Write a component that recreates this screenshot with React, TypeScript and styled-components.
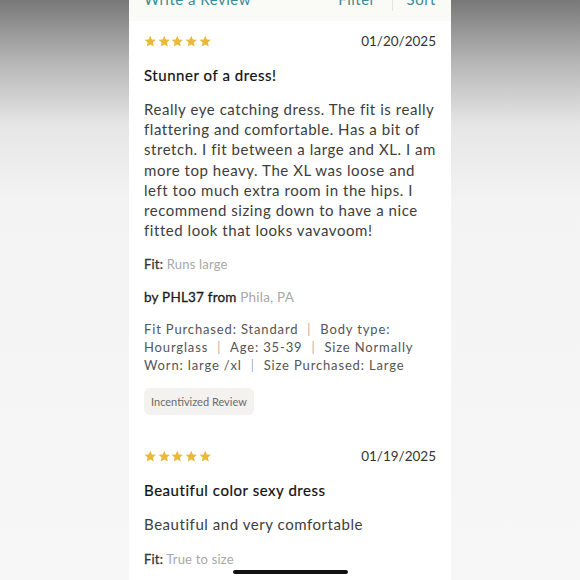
import styled, { createGlobalStyle } from 'styled-components'

const GlobalStyle = createGlobalStyle`
	html, body {
		margin: 0;
		padding: 0;
		height: 100%;
	}
	body {
		background: linear-gradient(180deg, #787878 0px, #b4b4b4 60px, #e6e6e6 125px, #f3f3f3 200px, #f7f7f7 580px);
		font-family: Lato, 'Open Sans', sans-serif;
	}
`

interface Review {
	date: string
	title: string
	body: string
	fit: string
	author?: string
	location?: string
	details?: string[][]
	incentivized?: boolean
}

const reviews: Review[] = [
	{
		date: '01/20/2025',
		title: 'Stunner of a dress!',
		body: 'Really eye catching dress. The fit is really flattering and comfortable. Has a bit of stretch. I fit between a large and XL. I am more top heavy. The XL was loose and left too much extra room in the hips. I recommend sizing down to have a nice fitted look that looks vavavoom!',
		fit: 'Runs large',
		author: 'PHL37',
		location: 'Phila, PA',
		details: [
			['Fit Purchased: Standard', 'Body type:'],
			['Hourglass', 'Age: 35-39', 'Size Normally'],
			['Worn: large /xl', 'Size Purchased: Large'],
		],
		incentivized: true,
	},
	{
		date: '01/19/2025',
		title: 'Beautiful color sexy dress',
		body: 'Beautiful and very comfortable',
		fit: 'True to size',
	},
]

const Stars = () => (
	<StarRow>
		{[0, 1, 2, 3, 4].map(i => (
			<svg key={i} width='12.5' height='12.5' viewBox='0 0 24 24'>
				<path d='M12 1.5l3.1 7.2 7.8.6-5.9 5.1 1.8 7.6L12 18l-6.8 4 1.8-7.6-5.9-5.1 7.8-.6z' fill='#ebb93a' />
			</svg>
		))}
	</StarRow>
)

const ReviewItem = ({ review }: { review: Review }) => (
	<ReviewBlock>
		<TopRow>
			<Stars />
			<DateText>{review.date}</DateText>
		</TopRow>
		<Title>{review.title}</Title>
		<Body>{review.body}</Body>
		<Meta>
			<strong>Fit:</strong> <Muted>{review.fit}</Muted>
		</Meta>
		{review.author ? (
			<Author>
				by {review.author} from <Muted>{review.location}</Muted>
			</Author>
		) : null}
		{review.details ? (
			<Details>
				{review.details.map((line, i) => (
					<div key={i}>
						{line.map((part, j) => (
							<span key={j}>
								{j > 0 ? <Sep>|</Sep> : null}
								{part}
							</span>
						))}
					</div>
				))}
			</Details>
		) : null}
		{review.incentivized ? <Badge>Incentivized Review</Badge> : null}
	</ReviewBlock>
)

const App = () => {
	return (
		<Page>
			<GlobalStyle />
			<Screen>
				<Header>
					<HeaderLink>Write a Review</HeaderLink>
					<HeaderRight>
						<HeaderLink>Filter</HeaderLink>
						<HeaderDivider />
						<HeaderLink>Sort</HeaderLink>
					</HeaderRight>
				</Header>
				{reviews.map(review => (
					<ReviewItem key={review.date} review={review} />
				))}
			</Screen>
			<HomeIndicator />
		</Page>
	)
}

export default App

const Page = styled.div`
	display: flex;
	justify-content: center;
	height: 580px;
	overflow: hidden;
`

const Screen = styled.div`
	width: 322px;
	background: #ffffff;
	height: 580px;
	overflow: hidden;
`

const Header = styled.div`
	height: 21px;
	background: #fafbf6;
	display: flex;
	justify-content: space-between;
	align-items: flex-start;
	padding: 0 15px;
	overflow: hidden;
`

const HeaderRight = styled.div`
	display: flex;
	align-items: flex-start;
`

const HeaderLink = styled.span`
	color: #3d8a99;
	font-size: 15px;
	line-height: 18px;
	margin-top: -10px;
	letter-spacing: 0.5px;
`

const HeaderDivider = styled.span`
	width: 1px;
	height: 11px;
	background: #e2e4de;
	margin: 0 14px 0 16px;
`

const ReviewBlock = styled.div`
	padding: 11px 15px 21px;
	color: #2b2b2b;
`

const TopRow = styled.div`
	display: flex;
	justify-content: space-between;
	align-items: center;
	height: 18px;
`

const StarRow = styled.div`
	display: flex;
	gap: 1.2px;
`

const DateText = styled.span`
	font-size: 13.5px;
	color: #333;
	letter-spacing: 0px;
`

const Title = styled.div`
	margin-top: 15px;
	font-size: 15px;
	font-weight: 400;
	line-height: 20px;
	color: #111;
	letter-spacing: 0.55px;
	-webkit-text-stroke: 0.2px #111;
`

const Body = styled.p`
	margin: 14px 0 0;
	font-size: 15px;
	line-height: 20.2px;
	color: #3d3d3d;
	letter-spacing: 0.55px;
`

const Meta = styled.div`
	margin-top: 15px;
	font-size: 13px;
	line-height: 18px;
	color: #333;
	letter-spacing: 0.2px;
	strong {
		font-weight: 400;
		-webkit-text-stroke: 0.3px #333;
	}
`

const Muted = styled.span`
	color: #a8a8a8;
	-webkit-text-stroke: 0;
`

const Author = styled.div`
	margin-top: 15px;
	font-size: 13.5px;
	line-height: 18px;
	color: #1a1a1a;
	letter-spacing: 0.2px;
	-webkit-text-stroke: 0.3px #1a1a1a;
	${Muted} {
		-webkit-text-stroke: 0;
	}
`

const Details = styled.div`
	margin-top: 14px;
	font-size: 13px;
	line-height: 18px;
	color: #555;
	letter-spacing: 0.85px;
`

const Sep = styled.span`
	margin: 0 9px;
	color: #666;
	font-weight: 300;
`

const Badge = styled.div`
	display: inline-block;
	margin-top: 14px;
	padding: 6px 7px;
	background: #f3f2ef;
	border-radius: 6px;
	font-size: 11px;
	line-height: 15px;
	color: #6b6b6b;
`

const HomeIndicator = styled.div`
	position: fixed;
	left: 233px;
	bottom: 6px;
	width: 115px;
	height: 4px;
	border-radius: 2px;
	background: #111;
`
